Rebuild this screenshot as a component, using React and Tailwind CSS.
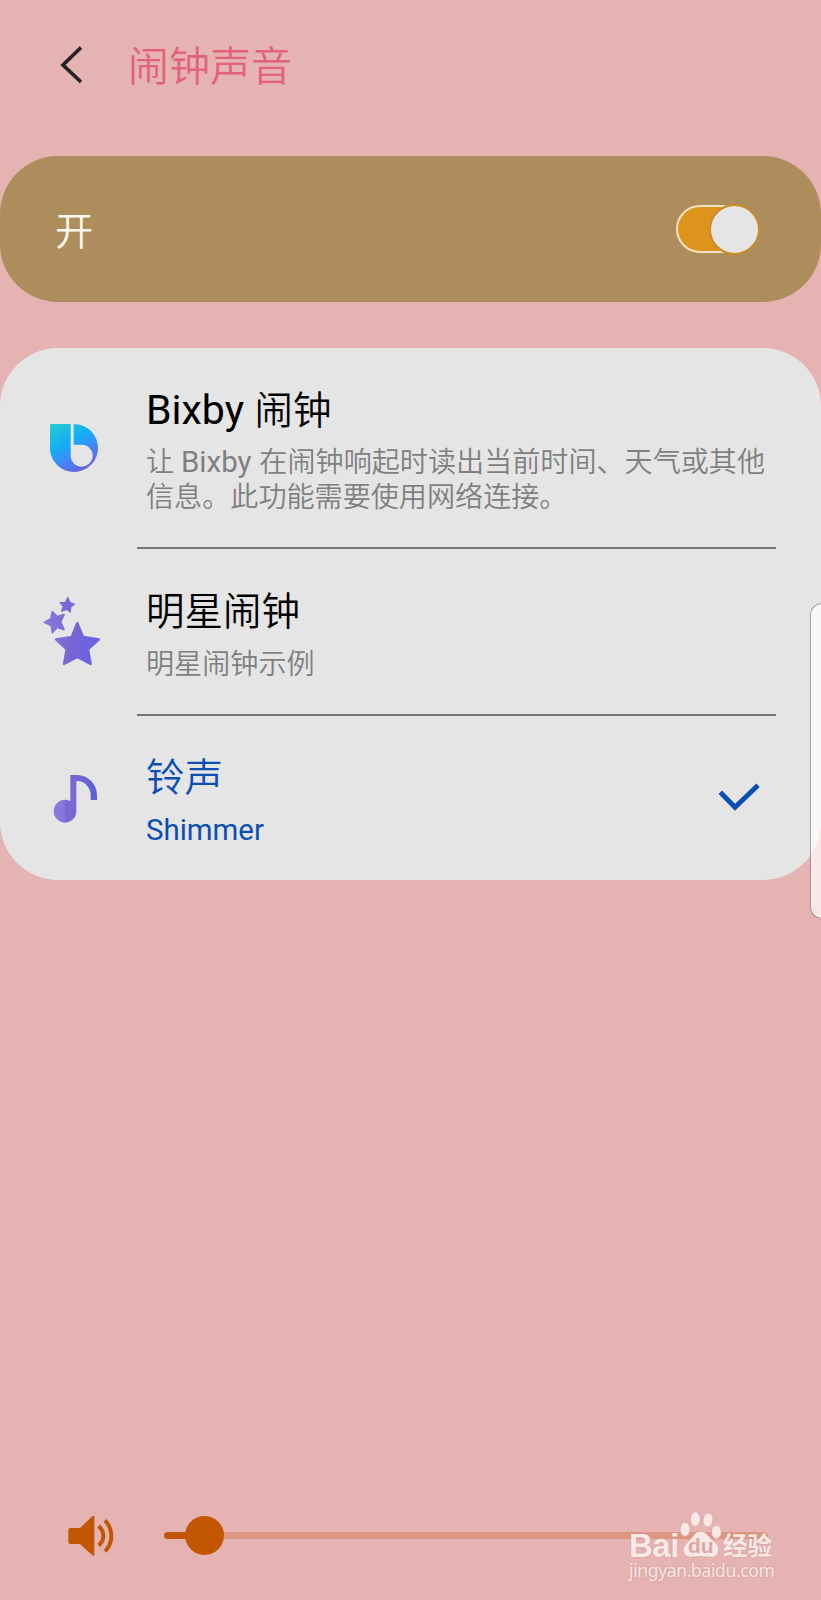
import React from "react";

const sans = "font-['Roboto','Noto_Sans_CJK_SC',sans-serif]";

function BixbyIcon() {
  return (
    <svg className="size-[90px]" viewBox="0 0 270 270">
      <defs>
        <linearGradient id="bixby" x1="80" y1="65" x2="165" y2="220" gradientUnits="userSpaceOnUse">
          <stop offset="0" stopColor="#27cbd2" />
          <stop offset="0.38" stopColor="#12b0f3" />
          <stop offset="0.65" stopColor="#4089fa" />
          <stop offset="1" stopColor="#7055dc" />
        </linearGradient>
      </defs>
      <path
        fill="url(#bixby)"
        d="M64 72H122V166A33 33 0 1 0 155 134H131V72A72 72 0 1 1 60 144V76Q60 72 64 72Z"
      />
    </svg>
  );
}

function StarsIcon() {
  return (
    <svg className="h-[100px] w-[90px]" viewBox="0 0 270 300">
      <defs>
        <linearGradient id="stars" x1="40" y1="0" x2="210" y2="0" gradientUnits="userSpaceOnUse">
          <stop offset="0" stopColor="#8b78df" />
          <stop offset="0.5" stopColor="#7865d2" />
          <stop offset="1" stopColor="#6762e8" />
        </linearGradient>
      </defs>
      <g fill="url(#stars)" stroke="url(#stars)" strokeLinejoin="round">
        <path strokeWidth="7" d="M142 129L159 171L207 178L174 208L182 252L142 231L102 252L110 208L78 178L125 171Z" />
        <path strokeWidth="5" d="M67 95L81 110L102 104L92 126L102 149L81 142L67 158L64 137L43 127L63 116Z" />
        <path strokeWidth="4" d="M114 53L119 67L133 73L122 81L121 96L110 88L95 93L100 79L90 68L106 67Z" />
      </g>
    </svg>
  );
}

function NoteIcon() {
  return (
    <svg className="size-[90px]" viewBox="0 0 270 270">
      <defs>
        <linearGradient id="note" x1="70" y1="0" x2="200" y2="0" gradientUnits="userSpaceOnUse">
          <stop offset="0" stopColor="#8d7ae2" />
          <stop offset="0.27" stopColor="#8772dc" />
          <stop offset="0.28" stopColor="#7c68d0" />
          <stop offset="0.55" stopColor="#7666d6" />
          <stop offset="1" stopColor="#5a60d8" />
        </linearGradient>
      </defs>
      <path
        fill="url(#note)"
        d="M121 75H142A59 61 0 0 1 201 136V150H182V136A41 43 0 0 0 141 93H139V184A34 34.500 0 1 1 121 153Z"
      />
    </svg>
  );
}

function Option({ icon, iconClass, title, text, tone, checked }) {
  return (
    <div className="flex h-full pl-[30px]">
      <div className={`w-[90px] shrink-0 ${iconClass}`}>{icon}</div>
      <div className={`ml-[26px] w-[630px] pt-[38.500px] ${tone}`}>
        <div className="h-12 text-[38.500px] leading-[48px] whitespace-nowrap">{title}</div>
        <div className="mt-[11px] text-[28.100px] leading-[35px]">{text}</div>
      </div>
      {checked && (
        <svg className="-ml-[60px] mt-[64.500px] h-9 w-12" viewBox="0 0 48 36" fill="none" stroke="#0b4fb5" strokeWidth="4.900">
          <path d="M4.300 12.300L19 27.300L42 5.300" />
        </svg>
      )}
    </div>
  );
}

function Watermark() {
  return (
    <div className="absolute top-[1508px] left-[629px] w-[150px] font-normal text-[#f8e8e6] [text-shadow:0_0_2px_#c98f8f]">
      <div className="flex h-[51px] items-end">
        <span className="w-[50px] font-['Liberation_Sans',sans-serif] text-[33px] leading-[27px] font-bold tracking-[-0.500px]">Bai</span>
        <div className="relative h-[51px] w-[44px]">
          <svg className="h-[54px] w-[44px]" viewBox="0 0 132 162" fill="#f8e8e6" stroke="#d3a09e" strokeWidth="2">
            <ellipse cx="18" cy="64" rx="15" ry="21" />
            <ellipse cx="49" cy="33" rx="15" ry="22" />
            <ellipse cx="87" cy="36" rx="15" ry="21" transform="rotate(10 87 36)" />
            <ellipse cx="112" cy="72" rx="15" ry="20" />
            <path d="M65 70C82 70 88 86 103 99C118 109 121 120 118 132C115 147 101 149 85 147Q65 144 45 147C27 149 15 144 13 130C11 116 20 109 30 99C43 86 48 70 65 70Z" />
          </svg>
          <span className="absolute top-[26px] left-[9px] font-['Liberation_Sans',sans-serif] text-[21px] leading-6 font-bold text-[#dda5a3] [text-shadow:none]">du</span>
        </div>
        <span className="font-['Noto_Sans_CJK_SC',sans-serif] text-[24.500px] leading-[28px] font-bold">经验</span>
      </div>
      <div className="font-['Noto_Sans',sans-serif] text-[17.500px] leading-[22px] tracking-[-0.350px]">jingyan.baidu.com</div>
    </div>
  );
}

export default function App() {
  return (
    <main lang="zh-CN" className={`relative flex h-[1600px] w-[821px] flex-col overflow-hidden bg-[#e6b3b3] font-[350] ${sans}`}>
      <header className="flex h-[156px] pt-[40px] pl-[54px]">
        <svg className="h-[50px] w-[74px]" viewBox="0 0 74 50" fill="none" stroke="#242222" strokeWidth="3.700">
          <path d="M27 7.500L9 25L27 42" />
        </svg>
        <h1 className="h-[54px] text-[41px] leading-[54px] font-[350] text-[#e2627b]">闹钟声音</h1>
      </header>

      <section className="flex h-[146px] items-center justify-between rounded-[58px] bg-[#ad8d5c] pr-[62px] pl-[55px]">
        <span className="pt-1.5 text-[38.300px] leading-[48px] text-[#fffaf0]">开</span>
        <div className="flex h-[48px] w-[83px] items-center justify-end rounded-full border-[2.500px] border-[#fae3c2] bg-[#de931d]">
          <div className="-mr-[3px] size-[51px] shrink-0 rounded-full border-[2.500px] border-[#cb8b27] bg-[#e5e5e5]" />
        </div>
      </section>

      <section className="mt-[45.500px] h-[532.500px] rounded-[58px] bg-[#e5e5e5]">
        <div className="h-[199.500px]">
          <Option
            icon={<BixbyIcon />}
            iconClass="pt-[52.500px]"
            tone="text-black"
            title={<><span className="mr-px text-[41px] font-normal">Bixby</span> 闹钟</>}
            text={
              <span className="text-[#7f7f7f]">
                让 <span className="mr-px text-[29.500px] font-normal">Bixby</span> 在闹钟响起时读出当前时间、天气或其他
                <br />
                信息。此功能需要使用网络连接。
              </span>
            }
          />
        </div>
        <div className="mr-[45px] ml-[137px] h-[2px] bg-[#757575]" />
        <div className="h-[164.500px]">
          <Option
            icon={<StarsIcon />}
            iconClass="pt-[31px]"
            tone="text-black"
            title="明星闹钟"
            text={<span className="text-[#7f7f7f]">明星闹钟示例</span>}
          />
        </div>
        <div className="mr-[45px] ml-[137px] h-[2px] bg-[#757575]" />
        <div className="h-[164px]">
          <Option
            icon={<NoteIcon />}
            iconClass="pt-[34px]"
            tone="text-[#0b4fb5]"
            title="铃声"
            text={<span className="text-[29.400px] font-normal">Shimmer</span>}
            checked
          />
        </div>
      </section>

      <footer className="mt-auto flex h-[110px] items-start pl-[40px]">
        <svg className="h-[90px] w-[124px]" viewBox="0 0 372 270" fill="#c35600">
          <path d="M91 114H120L157 79Q163 75 163 81V194Q163 200 157 196L120 162H91Q85 162 85 156V120Q85 114 91 114Z" />
          <g fill="none" stroke="#c35600" strokeWidth="12">
            <path d="M176 108Q190 121 190 138T176 166" />
            <path d="M195 91Q214 111 214 138T195 184" />
          </g>
        </svg>
        <div className="mt-[26px] flex h-[39px] w-[604px] items-center">
          <div className="h-[7px] w-[24px] rounded-l-full bg-[#c35600]" />
          <div className="-ml-[3px] size-[39px] rounded-full bg-[#c35600]" />
          <div className="h-[7px] flex-1 rounded-r-full bg-[#dd9781]" />
        </div>
      </footer>

      <div className="absolute top-[603px] -right-[10px] h-[316px] w-[21px] rounded-l-[12px] border border-[#8f8686]/70 bg-white/70 bg-clip-padding" />
      <Watermark />
    </main>
  );
}
